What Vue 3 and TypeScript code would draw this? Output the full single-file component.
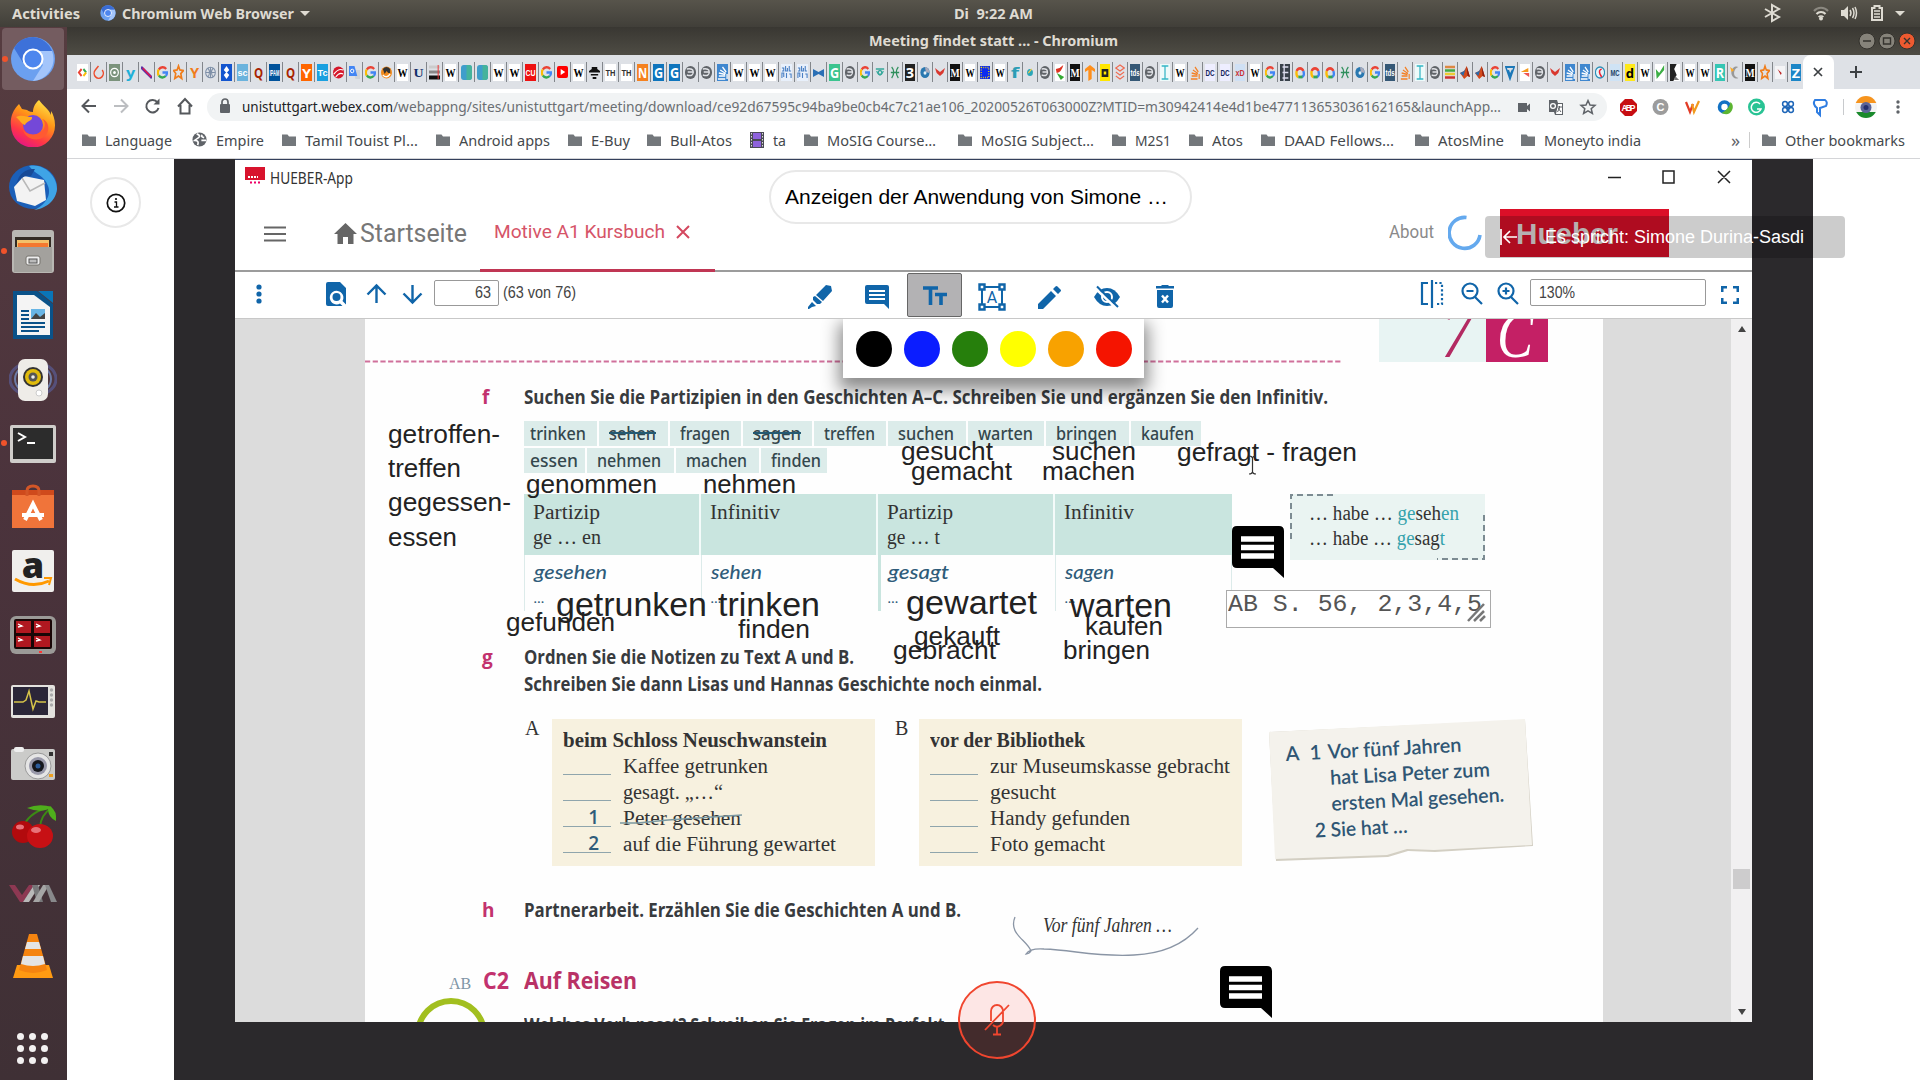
<script setup lang="ts">
import type { Directive } from 'vue'

/* Fits a run of text to an exact width in pixels. */
const vFit: Directive<HTMLElement, number> = {
  mounted(el, binding) {
    const natural = el.getBoundingClientRect().width
    if (!natural) return
    el.style.width = binding.value + 'px'
    el.style.transform = `scaleX(${binding.value / natural})`
  },
}

interface Fav { k: string; t?: string; c?: string; b?: string }
const F = (k: string, t = '', c = '', b = ''): Fav => ({ k, t, c, b })
const W = F('serif', 'W', '#000', '#fff')
const G = F('g')
const globe = F('globe')
const M = F('serif', 'M', '#fff', '#111')
const tds = F('tiny', 'tds', '#fff', '#355876')
const so = F('so', '', '#f48024')
const sob = F('so', '', '#fff', '#3f87cf')
const beam = F('beam')
const cloud = F('cloud')
const matlab = F('matlab')
const hh = F('hh')
const chev = F('chev')

const favs: Fav[] = [
  F('code'), F('ring'), F('target'), F('sans', 'y', '#1fb0d8'), F('slash'), G, F('star'), F('sans', 'Y', '#f07c1c'), F('sphere'),
  F('dia', '', '#fff', '#1355cf'), F('tiny', 'sc', '#fff', '#6bb3dd'), F('sans', 'Q', '#a82400'), F('tiny', 'IPAM', '#fff', '#00529b'), F('sans', 'Q', '#a82400'),
  F('plain', 'Y', '#fff', '#ff6600'), F('tiny', 'Tc', '#fff', '#1aa0e0'), F('swirl'), F('trans'), G, F('face'), W,
  F('serif', 'U', '#12306b'), F('bars'), W, F('teal'), F('teal'), W, W, F('tiny', 'CU', '#fff', '#ee1111'), G, F('yt'), W, F('bee'),
  F('th', 'TH', '#333', '#fff'), F('th', 'TH', '#333', '#fff'), F('sans', 'N', '#fff', '#f58220'), F('sans', 'G', '#fff', '#0f75bd'), F('sans', 'G', '#fff', '#0f75bd'),
  globe, globe, sob, W, W, W, F('bib'), F('bib'), F('fly'), F('sans', 'G', '#fff', '#3cc48f'),
  globe, G, F('eye'), hh, F('sans', '3', '#fff', '#222'), F('orb'), chev, M, W, F('eu'), W, F('sans', 'f', '#2c9db5'), F('dot'), globe,
  F('chili'), M, F('tf'), F('ysq'), F('stack'), tds, globe, beam, W, so, F('tiny', 'DC', '#12245a', '#eef'), F('tiny', 'DC', '#12245a', '#eef'), F('tiny', 'xD', '#c33', '#cfe0f4'), W, G,
  F('film'), cloud, cloud, cloud, hh, F('orb'), G, tds, so, beam, globe, F('books'), matlab, matlab, G, F('tri'), F('flag'), globe, chev,
  sob, sob, F('cee'), F('tiny', 'MC', '#246', '#cfe3f5'), F('plain', 'd', '#000', '#ffe81a'), W, F('leaf'), F('photo'), W, W,
  F('sans', 'R', '#fff', '#35c6b4'), F('moon'), M, F('star'), F('pin'), F('plain', 'Z', '#fff', '#1c86c7'),
]

interface Mark { w: number; t: string; i?: string; tw: number }
const marks: Mark[] = [
  { w: 110, t: 'Language', tw: 67 },
  { w: 90, t: 'Empire', tw: 48, i: 'globe' },
  { w: 154, t: 'Tamil Touist Pl…', tw: 113 },
  { w: 132, t: 'Android apps', tw: 91 },
  { w: 79, t: 'E-Buy', tw: 39 },
  { w: 103, t: 'Bull-Atos', tw: 62 },
  { w: 54, t: 'ta', tw: 13, i: 'film' },
  { w: 154, t: 'MoSIG Course…', tw: 109 },
  { w: 154, t: 'MoSIG Subject…', tw: 113 },
  { w: 77, t: 'M2S1', tw: 36 },
  { w: 72, t: 'Atos', tw: 31 },
  { w: 154, t: 'DAAD Fellows…', tw: 110 },
  { w: 106, t: 'AtosMine', tw: 66 },
  { w: 130, t: 'Moneyto india', tw: 97 },
]

const dock = ['chromium', 'firefox', 'bird', 'files', 'writer', 'rhythm', 'term', 'soft', 'amazon', 'termi', 'monitor', 'camera', 'cherry', 'vmm', 'vlc']
const running = ['chromium', 'files', 'term']

const swatches = ['#000', '#0b1dff', '#267f0c', '#ffff00', '#f8a200', '#f51400']

interface Chip { t: string; w: number; tw: number; s?: boolean }
const chips1: Chip[] = [
  { t: 'trinken', w: 73, tw: 56 }, { t: 'sehen', w: 69, tw: 47, s: true }, { t: 'fragen', w: 71, tw: 50 },
  { t: 'sagen', w: 69, tw: 48, s: true }, { t: 'treffen', w: 72, tw: 51 }, { t: 'suchen', w: 78, tw: 56 },
  { t: 'warten', w: 76, tw: 55 }, { t: 'bringen', w: 83, tw: 61 }, { t: 'kaufen', w: 70, tw: 53 },
]
const chips2: Chip[] = [
  { t: 'essen', w: 61, tw: 48 }, { t: 'nehmen', w: 87, tw: 64 }, { t: 'machen', w: 83, tw: 61 }, { t: 'finden', w: 66, tw: 50 },
]

const cols = [
  { h: 'Partizip', hw: 67, e: 'ge … en', ew: 68, s: 'gesehen', sw: 73 },
  { h: 'Infinitiv', hw: 70, e: '', ew: 0, s: 'sehen', sw: 51 },
  { h: 'Partizip', hw: 66, e: 'ge … t', ew: 53, s: 'gesagt', sw: 61 },
  { h: 'Infinitiv', hw: 70, e: '', ew: 0, s: 'sagen', sw: 49 },
]

const storyA = [
  { n: '', t: 'Kaffee getrunken', w: 145 }, { n: '', t: 'gesagt. „…“', w: 100 },
  { n: '1', t: 'Peter gesehen', w: 118, s: true }, { n: '2', t: 'auf die Führung gewartet', w: 213 },
]
const storyB = [
  { n: '', t: 'zur Museumskasse gebracht', w: 240 }, { n: '', t: 'gesucht', w: 66 },
  { n: '', t: 'Handy gefunden', w: 140 }, { n: '', t: 'Foto gemacht', w: 115 },
]

/* Typed annotations on the page canvas: left, baseline, width, font size. */
const notes: [string, number, number, number, number][] = [
  ['getroffen-', 388, 443, 112, 26], ['treffen', 388, 477, 73, 26], ['gegessen-', 388, 511, 123, 26], ['essen', 388, 546, 69, 26],
  ['genommen', 526, 493, 131, 26], ['nehmen', 703, 493, 93, 26],
  ['getrunken', 556, 616, 151, 34], ['trinken', 718, 616, 102, 34], ['gefunden', 506, 631, 109, 26], ['finden', 738, 638, 72, 26],
  ['gesucht', 901, 460, 92, 26], ['gemacht', 911, 480, 101, 26], ['suchen', 1052, 460, 84, 26], ['machen', 1042, 480, 93, 26],
  ['gefragt - fragen', 1177, 461, 180, 26],
  ['gewartet', 906, 614, 131, 34], ['warten', 1070, 617, 102, 34], ['gekauft', 914, 645, 86, 26], ['gebracht', 893, 659, 103, 26],
  ['kaufen', 1085, 635, 78, 26], ['bringen', 1063, 659, 87, 26],
]
const noteStyle = (n: [string, number, number, number, number]) => ({
  left: n[1] - 235 + 'px',
  top: n[2] - 319 - n[4] * 0.8465 + 'px',
  fontSize: n[4] + 'px',
})
</script>

<template>
  <div class="desk">
    <header class="topbar">
      <b v-fit="68" class="act">Activities</b>
      <svg class="appico" width="16" height="16" viewBox="0 0 48 48"><circle cx="24" cy="24" r="23" fill="#6ba0f0" /><path d="M24 1A23 23 0 0 0 4 12l10 17 10-15h20A23 23 0 0 0 24 1" fill="#3a6cd4" /><path d="M44 14H24l10 15-10 18a23 23 0 0 0 20-33" fill="#a3c5fb" /><circle cx="24" cy="24" r="10.500" fill="#4d86ee" stroke="#fff" stroke-width="2.500" /></svg>
      <b v-fit="172" class="app">Chromium Web Browser</b>
      <i class="tri"></i>
      <b v-fit="79" class="clock">Di&nbsp; 9:22 AM</b>
      <svg class="tray" width="150" height="27" viewBox="0 0 150 27" fill="none" stroke="#dedbd2">
        <path d="M1 9l14 8-7 4V5l7 4L1 17" stroke-width="2" transform="translate(2 0)" />
        <g transform="translate(51 0)" stroke-width="2"><path d="M1 11a9 9 0 0 1 14 0" stroke="#8b8880" /><path d="M3.500 14a6 6 0 0 1 9 0" /><path d="M5.500 17a3.500 3.500 0 0 1 5 0" stroke-width="1.500" /><circle cx="8" cy="18.500" r="1" fill="#dedbd2" /></g>
        <g transform="translate(79 0)"><path d="M0 10h3l4-4v14l-4-4H0z" fill="#dedbd2" stroke="none" /><path d="M9 10q2 3 0 6M11.500 8q3 5 0 10M14 7q3 6 0 12" stroke-width="1.500" /></g>
        <g transform="translate(109 0)"><path d="M1 8h2.500V6h5v2H11v12H1z" stroke-width="2" /><path d="M3 11h6M3 14h6M3 17h6" stroke-width="1.500" /></g>
        <path d="M133 11h10l-5 5z" fill="#dedbd2" stroke="none" />
      </svg>
    </header>

    <div class="under">
      <aside class="dock">
        <div v-for="d in dock" :key="d" class="slot" :class="[d, { on: d === 'chromium' }]">
          <i v-if="running.includes(d)" class="run"></i>
          <svg width="48" height="48" viewBox="0 0 48 48">
            <g v-if="d === 'chromium'"><circle cx="24" cy="24" r="22" fill="#6ba0f0" /><path d="M24 2A22 22 0 0 0 5 13l11 18 8-15h19A22 22 0 0 0 24 2" fill="#3d71d9" /><path d="M43 16H24l10 14-10 16a22 22 0 0 0 19-30" fill="#a3c5fb" /><circle cx="24" cy="24" r="9.500" fill="#4d86ee" stroke="#fff" stroke-width="2" /></g>
            <g v-else-if="d === 'firefox'">
              <defs><linearGradient id="ff" x1=".8" y1="0" x2=".3" y2="1"><stop offset="0" stop-color="#ffe94a" /><stop offset=".4" stop-color="#ff9417" /><stop offset=".75" stop-color="#ff3647" /><stop offset="1" stop-color="#e31587" /></linearGradient></defs>
              <path d="M30 1c-5 4-6 9-6 12-4 0-6-2-6-2l-5-1-3-5c-7 7-9 15-8 22a22 22 0 0 0 44-1c0-6-2-11-4-14v4C40 10 34 7 30 1" fill="url(#ff)" /><circle cx="24" cy="26" r="10" fill="#7448d8" /><path d="M7 18c6-3 10 0 16 0 1 4-6 4-7 8-4-1-5-5-9-8" fill="#ffab1f" /><path d="M14 30c2 6 14 8 20 1 3-4 2-9-1-11 8 2 9 15 0 19-8 4-18-1-19-9" fill="#ff5a32" />
            </g>
            <g v-else-if="d === 'bird'"><ellipse cx="24" cy="24" rx="24" ry="22" fill="#1b5fb8" /><path d="M20 3C34 0 48 12 48 26 47 38 36 46 25 47c10-4 18-14 14-24C35 12 27 12 20 3" fill="#3fa4e6" /><path d="M5 24l10-11 20 4 2 20-11 6-18-5z" fill="#f3f3f3" /><path d="M13 15l8 13 15-8" fill="none" stroke="#b8b8b8" stroke-width="1.500" /><path d="M10 14q6-9 16-8l-4 7q-8-2-15 8z" fill="#174a97" /></g>
            <g v-else-if="d === 'files'"><rect x="3" y="3" width="42" height="43" rx="3" fill="#b9b7b3" /><rect x="6" y="10" width="36" height="11" fill="#332b24" /><path d="M8 13h32v8H8z" fill="#f3c16a" /><path d="M9 16h30v5H9z" fill="#f4782f" /><rect x="5" y="20" width="38" height="25" fill="#a3a19d" /><rect x="17" y="29" width="14" height="9" rx="2" fill="#eee" stroke="#77746f" /><rect x="20" y="32" width="8" height="4" fill="#bbb" stroke="#555" /></g>
            <g v-else-if="d === 'writer'"><path d="M4 0h24l16 13v35H4z" fill="#0a5289" /><path d="M29 0h15v12z" fill="#0a75b8" /><path d="M8 4h17l16 12v28H8z" fill="#f4f4f4" /><path d="M12 20h8M12 24h8M12 28h8M12 32h24M12 36h24M12 40h18" stroke="#0a5289" stroke-width="2" /><rect x="22" y="18" width="14" height="10" fill="#68b5e5" /><path d="M22 28l5-6 4 4 5-4v6z" fill="#444" /></g>
            <g v-else-if="d === 'rhythm'"><ellipse cx="24" cy="24" rx="23" ry="17" fill="none" stroke="#56507a" stroke-width="3" /><ellipse cx="24" cy="24" rx="18" ry="15" fill="none" stroke="#6d7ba6" stroke-width="2" /><rect x="9" y="4" width="30" height="42" rx="7" fill="#eeece8" /><circle cx="24" cy="22" r="10" fill="#333" /><circle cx="24" cy="22" r="8" fill="#e0bb0c" /><circle cx="24" cy="22" r="4.500" fill="#555" /><circle cx="24" cy="22" r="1.800" fill="#eee" /><circle cx="30" cy="38" r="3" fill="#fff" stroke="#ccc" /></g>
            <g v-else-if="d === 'term'"><rect x="1" y="6" width="46" height="38" rx="2" fill="#cfcdca" /><rect x="4" y="9" width="40" height="31" fill="#2c2c2c" /><path d="M9 14l7 4-7 4" fill="none" stroke="#fff" stroke-width="2" /><path d="M18 24h8" stroke="#fff" stroke-width="2" /></g>
            <g v-else-if="d === 'soft'"><path d="M3 9h42v36H3z" fill="#f0743a" /><path d="M3 7h42v5H3z" fill="#cf4a1c" /><path d="M18 13V8q0-5 6-5t6 5v5" fill="none" stroke="#d35627" stroke-width="3" /><path d="M16 37l8-16 8 16M13 32h22" fill="none" stroke="#fff" stroke-width="4" /></g>
            <g v-else-if="d === 'amazon'"><rect x="3" y="3" width="42" height="42" rx="2" fill="#f0efed" /><text x="24" y="31" text-anchor="middle" font-family="Open Sans, sans-serif" font-weight="800" font-size="36" fill="#222">a</text><path d="M6 32q17 10 34 2" fill="none" stroke="#f90" stroke-width="3" /><path d="M35 31h7l-2 7" fill="none" stroke="#f90" stroke-width="2" /></g>
            <g v-else-if="d === 'termi'"><rect x="1" y="5" width="46" height="38" rx="6" fill="#9b9a97" /><rect x="5" y="8" width="38" height="30" rx="2" fill="#180606" /><path d="M7 10h15v12H7zM25 10h16v12H25zM7 25h15v11H7zM25 25h16v11H25z" fill="#b01820" /><path d="M9 13l4 2-4 1M27 13l4 2-4 1M9 27l4 2-4 1M27 27l4 2-4 1" fill="none" stroke="#fff" stroke-width="1.300" /><path d="M30 41h3" stroke="#f33" stroke-width="2" /></g>
            <g v-else-if="d === 'monitor'"><rect x="2" y="7" width="44" height="33" rx="2" fill="#e4e2de" /><rect x="4" y="9" width="35" height="28" fill="#2b2638" /><path d="M5 24h9l3-2 3-9 4 18 3-8 3 1h7" fill="none" stroke="#d5c34a" stroke-width="1.500" /><g fill="#aaa"><circle cx="42.500" cy="12" r="1.700" /><circle cx="42.500" cy="17" r="1.700" /><circle cx="42.500" cy="22" r="1.700" /><circle cx="42.500" cy="27" r="1.700" /></g></g>
            <g v-else-if="d === 'camera'"><rect x="2" y="10" width="44" height="31" rx="2" fill="#cbcbc9" /><rect x="5" y="8" width="10" height="5" rx="2" fill="#eee" /><circle cx="29" cy="27" r="13" fill="#e5e5e5" stroke="#999" /><circle cx="29" cy="27" r="9" fill="#99a" /><circle cx="29" cy="27" r="6" fill="#15171d" /><circle cx="29" cy="27" r="2.500" fill="#2c5c9b" /><path d="M40 13h4v4h-4z" fill="#333" /><path d="M40 35h4v3h-4z" fill="#f0a020" /></g>
            <g v-else-if="d === 'cherry'"><path d="M15 22Q22 8 42 4M31 24Q32 12 42 5" fill="none" stroke="#3c8a14" stroke-width="2" /><path d="M18 5q12-5 25-1-10 7-25 1M42 4q6 4 5 14-8-4-8-12" fill="#4fae1c" /><ellipse cx="14" cy="29" rx="11" ry="11" fill="#b20a0d" /><ellipse cx="31" cy="33" rx="13" ry="12" fill="#c71014" /><ellipse cx="27" cy="27" rx="5" ry="3" fill="#e8737a" /><ellipse cx="11" cy="24" rx="4" ry="2.500" fill="#e8737a" /></g>
            <g v-else-if="d === 'vmm'"><path d="M0 15h6l7 10 7-10h5L14 32h-3z" fill="#8d3852" /><path d="M14 32l11-17h6L20 32z" fill="#b9b9b9" /><path d="M23 15h6l5 17h-6z" fill="#77787a" /><path d="M24 32l10-17h6L30 32z" fill="#a5a5a5" /><path d="M36 15h4l8 17h-6z" fill="#88898b" /></g>
            <g v-else><path d="M8 34h32l4 13H4z" fill="#ff9a12" /><path d="M20 3h8l10 36q-14 6-28 0z" fill="#f58410" /><path d="M18 11h12l2 7H16zM14 25h20l2 8q-12 4-24 0z" fill="#e4e4e4" /></g>
          </svg>
        </div>
        <div class="grid"><i v-for="n in 9" :key="n"></i></div>
      </aside>

      <main class="chrome">
        <div class="wtitle">
          <b v-fit="249">Meeting findet statt ... - Chromium</b>
          <div class="wbtns">
            <svg width="58" height="18" viewBox="0 0 58 18"><circle cx="9" cy="9" r="8" fill="#86837a" stroke="#33312c" /><circle cx="29" cy="9" r="8" fill="#86837a" stroke="#33312c" /><circle cx="49" cy="9" r="8" fill="#ee5a30" stroke="#33312c" /><path d="M5 9h8M25.500 6h7v6h-7zM46 6l6 6M52 6l-6 6" fill="none" stroke="#35332e" stroke-width="1.400" /></svg>
          </div>
        </div>

        <div class="tabs">
          <div v-for="(f, n) in favs" :key="n" class="tab" :class="{ slim: n > 47 }">
            <svg width="11" height="17" viewBox="0 0 12 17" preserveAspectRatio="none">
              <rect v-if="f.b" width="12" height="17" :fill="f.b" />
              <text v-if="f.k === 'serif'" x="6" y="13" text-anchor="middle" font-family="Liberation Serif, serif" font-weight="bold" font-size="13" textLength="11" lengthAdjust="spacingAndGlyphs" :fill="f.c">{{ f.t }}</text>
              <text v-else-if="f.k === 'sans' || f.k === 'plain'" x="6" y="13.500" text-anchor="middle" font-family="Open Sans, sans-serif" font-weight="bold" :font-size="f.k === 'sans' ? 15 : 13" textLength="10" lengthAdjust="spacingAndGlyphs" :fill="f.c">{{ f.t }}</text>
              <text v-else-if="f.k === 'tiny' || f.k === 'th'" x="6" y="12" text-anchor="middle" font-family="Liberation Sans, sans-serif" font-weight="bold" font-size="9" textLength="11" lengthAdjust="spacingAndGlyphs" :fill="f.c">{{ f.t }}</text>
              <g v-else-if="f.k === 'g'" fill="none" stroke-width="2.400"><path d="M10 5A5 5 0 0 0 2 5.500" stroke="#ea4335" /><path d="M2 5.500a5 5 0 0 0 0 6" stroke="#fbbc05" /><path d="M2 11.500a5 5 0 0 0 7.500.500" stroke="#34a853" /><path d="M9.500 12q1.500-1.500 1.500-3.500H6" stroke="#4285f4" /></g>
              <g v-else-if="f.k === 'globe'"><rect x="0" y="2" width="12" height="13" rx="6" fill="#5f6368" /><path d="M2 5q7-1 7 3H3M9 8q0 5-7 3" fill="none" stroke="#e2e4e8" stroke-width="1.500" /></g>
              <g v-else-if="f.k === 'so'" fill="none" :stroke="f.c" stroke-width="1.400"><path d="M1 15h8M2 12h7M2 9l7 1.500M3.500 6l6 3.500M6 3l4 5M11 10v5" /></g>
              <g v-else-if="f.k === 'beam'"><rect width="12" height="17" fill="#eefafa" /><path d="M2 2h8M6 2v13M2 15h8" stroke="#35b6c6" stroke-width="1.500" /></g>
              <g v-else-if="f.k === 'cloud'" fill="none" stroke-width="2.800"><path d="M2 7a4.300 4.300 0 0 1 8 0" stroke="#ea4335" /><path d="M2 7q-1 5 2 6" stroke="#fbbc05" /><path d="M10 7q2 5-2 6" stroke="#4285f4" /><path d="M4 13h5" stroke="#34a853" /></g>
              <g v-else-if="f.k === 'matlab'"><path d="M0 9l5-2 3-5 4 11-3-1-4 3z" fill="#d4491a" /><path d="M0 9l5-2 2-3-3 8z" fill="#2c6aa8" /><path d="M8 2l4 11-3-1z" fill="#8e1f10" /></g>
              <path v-else-if="f.k === 'hh'" d="M2 3q5 5 0 11M10 3Q5 8 10 14M1 8.500h10" fill="none" stroke="#2e8f5c" stroke-width="1.500" />
              <path v-else-if="f.k === 'chev'" d="M0 4l6 4 6-4-2 5-4 3-4-3z" fill="#d9382f" />
              <g v-else-if="f.k === 'code'"><rect width="12" height="17" fill="#fff" /><path d="M5 5L2 8.500 5 12" stroke="#ea4335" stroke-width="2" fill="none" /><path d="M7 5l3 3.500" stroke="#34a853" stroke-width="2" /><path d="M10 8.500L7 12" stroke="#fbbc05" stroke-width="2" /></g>
              <path v-else-if="f.k === 'ring'" d="M6 2L2.500 6a5 5 0 1 0 7.500 0" fill="none" stroke="#ee4c2c" stroke-width="1.600" />
              <g v-else-if="f.k === 'target'"><rect width="12" height="17" fill="#7b937c" /><circle cx="6" cy="8.500" r="4.200" fill="none" stroke="#fff" stroke-width="1.300" /><circle cx="6" cy="8.500" r="1.500" fill="#fff" /></g>
              <g v-else-if="f.k === 'slash'"><path d="M0 3l12 11" stroke="#5a2ea6" stroke-width="3" /><path d="M2 4l9 9" stroke="#e5194b" stroke-width="1.500" /></g>
              <path v-else-if="f.k === 'star'" d="M6 2l1.500 4 4 .5-3 3 1 5L6 12l-4 2.500 1-5-2.500-3 4-.5z" fill="none" stroke="#f07d1a" stroke-width="1.800" />
              <g v-else-if="f.k === 'sphere'" fill="none" stroke="#7f90a8" stroke-width="1.100"><circle cx="6" cy="8.500" r="5.300" /><path d="M6 3v11M1 8.500h10M3 4q4 4 0 9M9 4q-4 4 0 9" /></g>
              <path v-else-if="f.k === 'dia'" d="M6 2l3 4-3 3-3-3zM6 8l3 3-3 4-3-4z" fill="#fff" />
              <g v-else-if="f.k === 'swirl'"><circle cx="6" cy="8.500" r="6" fill="#d6182b" /><path d="M1 10q5-6 10-4M3 13q4-5 8-3" stroke="#fff" fill="none" stroke-width="1.200" /></g>
              <g v-else-if="f.k === 'trans'"><path d="M5 6h7v9H7z" fill="#cfd3d8" /><path d="M0 2h6l3 10H0z" fill="#4285f4" /><circle cx="3.500" cy="7" r="1.800" fill="none" stroke="#fff" /></g>
              <g v-else-if="f.k === 'face'"><circle cx="6" cy="8.500" r="6" fill="#f18a1c" /><path d="M2 5q4-4 8 0v4H8L6 7l-2 3z" fill="#333" /><path d="M2 11q4 4 8-1" stroke="#fff" fill="none" stroke-width="1.500" /></g>
              <g v-else-if="f.k === 'bars'"><path d="M0 3h12" stroke="#ccc" stroke-width="3" /><path d="M0 8h12" stroke="#888" stroke-width="3" /><path d="M0 13.500h12" stroke="#111" stroke-width="4" /><path d="M10 1v14" stroke="#e33" stroke-width="1" /></g>
              <g v-else-if="f.k === 'teal'"><rect y="1" width="12" height="15" rx="3" fill="#3f9ecb" /><path d="M6 1h3q3 0 3 3v9q0 3-3 3H6z" fill="#45b39c" /></g>
              <g v-else-if="f.k === 'yt'"><rect y="2" width="12" height="12" rx="2" fill="#f00" /><path d="M4 5l5 3-5 3z" fill="#fff" /></g>
              <g v-else-if="f.k === 'bee'" fill="#111"><path d="M3 3h6v2H3zM0 7h12v1.500H0zM2 10h8v1.500H2zM4 13h4v2H4z" /><path d="M0 7l3-2h6l3 2z" /></g>
              <g v-else-if="f.k === 'bib'"><rect width="12" height="17" fill="#e8f0fb" /><path d="M1 4h2v3H1M5 2v5h2V4M9 2v5h2M1 14V9h2v4M6 9v5M9 10h2v4" stroke="#4a80c4" fill="none" stroke-width="1.200" /></g>
              <path v-else-if="f.k === 'fly'" d="M0 5l6 3 6-3v8L6 10l-6 3z" fill="#2a6fb5" />
              <g v-else-if="f.k === 'eye'" fill="none" stroke="#35a89b" stroke-width="1.300"><path d="M1 5h10M2 7q4 8 8 0" /><circle cx="6" cy="8.500" r="2" /></g>
              <g v-else-if="f.k === 'orb'"><circle cx="6" cy="8.500" r="5.500" fill="#2a78b0" /><path d="M6 3a5 5 0 0 1 5 6L7 8z" fill="#aab" /><circle cx="6" cy="9" r="1.800" fill="#e6f1f8" /></g>
              <g v-else-if="f.k === 'eu'"><rect y="2" width="12" height="13" fill="#0c2cf0" /><rect x="1.500" y="3.500" width="9" height="10" fill="none" stroke="#fd0" stroke-width="1.400" stroke-dasharray="1 1.500" /></g>
              <g v-else-if="f.k === 'dot'"><circle cx="6" cy="8.500" r="3.500" fill="#2aa6b8" /><path d="M4 9q3-3 4-4" stroke="#fc4" stroke-width="1.200" /></g>
              <g v-else-if="f.k === 'chili'"><rect width="12" height="17" fill="#fff" /><path d="M1 5q6-1 9-4-2 7-8 8z" fill="#d32" /><path d="M2 9l9 4-4 3z" fill="#3a3" /></g>
              <path v-else-if="f.k === 'tf'" d="M0 5l6-4 6 4v3L8 6v9l-4 2V6L0 8z" fill="#ff8f1a" />
              <g v-else-if="f.k === 'ysq'"><rect width="12" height="17" fill="#ffe600" /><rect x="2" y="5" width="8" height="8" fill="#222" /><rect x="4.500" y="7.500" width="3" height="3" fill="#ffe600" /></g>
              <path v-else-if="f.k === 'stack'" d="M1 4l5-3 5 3-5 3zM1 8l5 3 5-3M1 12l5 3 5-3" fill="none" stroke="#f0694f" stroke-width="1.300" />
              <g v-else-if="f.k === 'film'"><rect width="12" height="17" fill="#39414a" /><path d="M3 3h7M3 8.500h7M3 14h7M5 0v17" stroke="#dde" stroke-width="1.600" /></g>
              <g v-else-if="f.k === 'books'"><path d="M0 3h12" stroke="#d84" stroke-width="2.500" /><path d="M0 6.500h12" stroke="#4a4" stroke-width="2.500" /><path d="M0 10h12" stroke="#ec3" stroke-width="2.500" /><path d="M0 13.500h12" stroke="#c33" stroke-width="2.500" /></g>
              <path v-else-if="f.k === 'tri'" d="M1 3h10L6 15zM4 6l2 5 3-5" fill="none" stroke="#1c78b8" stroke-width="1.800" />
              <g v-else-if="f.k === 'flag'"><rect width="12" height="17" fill="#fff" /><path d="M1 8l9-4v4z" fill="#f59a1c" /><path d="M4 9h7v4z" fill="#e55" /></g>
              <g v-else-if="f.k === 'cee'"><circle cx="6" cy="8.500" r="5.500" fill="#e5f3f8" stroke="#2b8fb8" stroke-width="1.400" /><path d="M8 5q-4 1-2 5l2 3" stroke="#e23" stroke-width="1.800" fill="none" /></g>
              <g v-else-if="f.k === 'leaf'"><rect width="12" height="17" fill="#fff" /><path d="M1 5l4 4 6-8v5l-9 9z" fill="#3cae45" /></g>
              <g v-else-if="f.k === 'photo'"><rect width="12" height="17" fill="#fff" /><path d="M0 0h8L5 5l3 6-4 6H0z" fill="#222" /><path d="M6 12l5 4H5z" fill="#777" /></g>
              <g v-else-if="f.k === 'moon'"><path d="M10 3a6 6 0 1 0 0 11q-6-1-5-6 1-4 5-5" fill="#999" /><path d="M0 3l5 3-3 2z" fill="#fa2" /></g>
              <g v-else-if="f.k === 'pin'"><rect y="2" width="12" height="13" fill="#f4f4f6" /><path d="M3 5l5 4-1 2z" fill="#b22" /></g>
            </svg>
          </div>
          <div class="tab-on"><svg width="10" height="10" viewBox="0 0 10 10"><path d="M1 1l8 8M9 1L1 9" stroke="#3c4043" stroke-width="1.700" /></svg></div>
          <svg class="plus" width="14" height="14" viewBox="0 0 14 14"><path d="M7 1v12M1 7h12" stroke="#3c4043" stroke-width="2" /></svg>
        </div>

        <div class="bar">
          <svg class="navs" width="119" height="24" viewBox="0 0 119 24" fill="none" stroke="#55585c" stroke-width="2">
            <path d="M16 12H3M9 5.500L2.500 12 9 18.500" />
            <path d="M34 12h13M41 5.500l6.500 6.500-6.500 6.500" stroke="#bcbec1" />
            <path d="M77.500 8.500A6.200 6.200 0 1 0 78.500 14" /><path d="M79.500 4.500v6h-6z" fill="#55585c" stroke="none" />
            <path d="M98 12.500l7-7.500 7 7.500M100.500 11v8.500h9V11" />
          </svg>
          <div class="url">
            <svg width="12" height="16" viewBox="0 0 12 16"><rect x="1" y="6" width="10" height="9" rx="1" fill="#5f6368" /><path d="M3 7V4a3 3 0 0 1 6 0v3" fill="none" stroke="#5f6368" stroke-width="1.700" /></svg>
            <span v-fit="151" class="host">unistuttgart.webex.com</span><span v-fit="1108" class="path">/webappng/sites/unistuttgart/meeting/download/ce92d67595c94ba9be0cb4c7c21ae106_20200526T063000Z?MTID=m30942414e4d1be477113653036162165&amp;launchApp…</span>
            <svg class="urlico" width="80" height="18" viewBox="0 0 80 18"><path d="M0 5h9v3l3-2.500v8L9 11v3H0z" fill="#5f6368" /><path d="M31 2h8l1 3h5v12h-8l-1-3h-5z" fill="#5f6368" /><path d="M40 6h4v10h-6z" fill="#fff" /><circle cx="35" cy="8" r="2.400" fill="none" stroke="#fff" stroke-width="1.300" /><path d="M39 9h5M41.500 8v2l-2 4M40 10l3 4" stroke="#5f6368" fill="none" /><path d="M70 2.500l2 4.500 5 .4-3.800 3.300 1.200 4.800-4.400-2.600-4.400 2.600 1.200-4.800L63 7.400 68 7z" fill="none" stroke="#5f6368" stroke-width="1.500" /></svg>
          </div>
          <svg class="ext" width="300" height="26" viewBox="0 0 300 26">
            <path d="M10 5h7l5 5v7l-5 5h-7l-5-5v-7z" fill="#c70d12" /><text x="13.500" y="16.500" text-anchor="middle" font-family="Liberation Sans, sans-serif" font-weight="bold" font-size="8.500" textLength="14" fill="#fff">ABP</text>
            <circle cx="45.500" cy="13" r="8" fill="#9c9c9c" /><text x="45.500" y="17" text-anchor="middle" font-family="Liberation Sans, sans-serif" font-weight="bold" font-size="11" fill="#fff">C</text>
            <path d="M71 8l4 10 3-8" fill="none" stroke="#e23b26" stroke-width="2.200" /><path d="M77 10l2 8 5-11" fill="none" stroke="#f29a1c" stroke-width="2.200" />
            <circle cx="109.500" cy="13" r="5" fill="#fff" stroke="#1272c4" stroke-width="3.600" /><path d="M109.500 20a7 7 0 0 0 6-12q-1 7-9 11z" fill="#5cb531" />
            <circle cx="141.500" cy="13" r="8.500" fill="#29c394" /><path d="M145 10a5 5 0 1 0 1 5h-4" fill="none" stroke="#fff" stroke-width="1.500" />
            <g fill="none" stroke="#1e66b8" stroke-width="1.500"><circle cx="170" cy="10" r="2.400" /><circle cx="176" cy="10" r="2.400" /><circle cx="170" cy="16" r="2.400" /><circle cx="176" cy="16" r="2.400" /><path d="M171 12l4 3M175 12l-4 3" /></g>
            <path d="M200 6h10q3 2 1 6l-6 2v7l-3-3v-4q-5-4-2-8z" fill="none" stroke="#2f7de1" stroke-width="2" />
            <path d="M228.500 5v16" stroke="#c8cacd" />
            <clipPath id="av"><circle cx="251" cy="13" r="11" /></clipPath><g clip-path="url(#av)"><rect x="240" y="2" width="22" height="22" fill="#f3f3f3" /><rect x="240" y="2" width="22" height="7" fill="#f7941d" /><rect x="240" y="18" width="22" height="7" fill="#1a8a2c" /><circle cx="251" cy="13.500" r="5.500" fill="#5c6598" /><circle cx="251" cy="13.500" r="2.500" fill="#26306d" /></g>
            <g fill="#5f6368"><circle cx="283" cy="8" r="1.700" /><circle cx="283" cy="13" r="1.700" /><circle cx="283" cy="18" r="1.700" /></g>
          </svg>
        </div>

        <nav class="marks">
          <div v-for="m in marks" :key="m.t" class="mark" :style="{ width: m.w + 'px' }">
            <svg v-if="!m.i" width="14" height="14" viewBox="0 0 14 14"><path d="M0 1.500h5.500L7 3.500h7v9.500H0z" fill="#73777b" /></svg>
            <svg v-else-if="m.i === 'globe'" width="15" height="15" viewBox="0 0 16 16"><circle cx="8" cy="8" r="7.500" fill="#5f6368" /><path d="M5 2q5 2 2 4T3 9q5 0 3 5M10 9h5M11 3q-2 2 2 3" stroke="#fff" stroke-width="1.800" fill="none" /></svg>
            <svg v-else width="14" height="16" viewBox="0 0 14 16"><rect width="14" height="16" fill="#4a4a55" /><rect x="3" y="1" width="8" height="6" fill="#8e62dc" /><rect x="3" y="9" width="8" height="6" fill="#8e62dc" /><path d="M1.500 1v14M12.500 1v14" stroke="#ddd" stroke-dasharray="1.500 1.500" /></svg>
            <span v-fit="m.tw">{{ m.t }}</span>
          </div>
          <span class="more">»</span><i class="msep"></i>
          <div class="mark"><svg width="14" height="14" viewBox="0 0 14 14"><path d="M0 1.500h5.500L7 3.500h7v9.500H0z" fill="#73777b" /></svg><span v-fit="120">Other bookmarks</span></div>
        </nav>

        <section class="web">
          <div class="left"><div class="info"><svg width="20" height="20" viewBox="0 0 20 20"><circle cx="10" cy="10" r="8.700" fill="none" stroke="#111" stroke-width="1.700" /><path d="M8.500 9h2v5M8 14h4.500" fill="none" stroke="#111" stroke-width="1.300" /><circle cx="10" cy="6" r="1.100" fill="#111" /></svg></div></div>

          <div class="stage">
            <div class="win">
              <div class="hb-title">
                <svg width="20" height="17" viewBox="0 0 20 17"><path d="M0 0h20v13H0z" fill="#d8132d" /><path d="M3 10h10" stroke="#fff" stroke-dasharray="2 1" stroke-width="2" /><path d="M5 15.500h11" stroke="#e06" stroke-dasharray="2 2" stroke-width="2" /></svg>
                <span v-fit="83">HUEBER-App</span>
                <svg class="hb-btns" width="124" height="14" viewBox="0 0 124 14" fill="none" stroke="#222" stroke-width="1.500"><path d="M0 7.500h13M55 1h11v12H55zM110 1l12 12M122 1l-12 12" /></svg>
              </div>
              <div class="hb-nav">
                <svg class="burger" width="22" height="16" viewBox="0 0 22 16"><path d="M0 1.500h22M0 8h22M0 14.500h22" stroke="#666" stroke-width="2" /></svg>
                <div class="home"><svg width="23" height="21" viewBox="0 0 23 21"><path d="M11.500 0L23 11h-3.500v10H14v-7H9v7H3.500V11H0z" fill="#666" /></svg><span v-fit="107">Startseite</span></div>
                <div class="book"><span v-fit="171">Motive A1 Kursbuch</span><svg width="14" height="14" viewBox="0 0 14 14"><path d="M1 1l12 12M13 1L1 13" stroke="#d4485f" stroke-width="2" /></svg></div>
                <span v-fit="45" class="about">About</span>
                <svg class="spin" width="34" height="42" viewBox="0 0 34 42"><path d="M18.500 5.500A15.500 15.500 0 1 0 32 23" fill="none" stroke="#64a9ee" stroke-width="3.600" /></svg>
                <div class="logo"><b v-fit="102">Hueber</b></div>
              </div>
              <div class="tools">
                <svg class="t1" width="181" height="30" viewBox="0 0 181 30" fill="#1065a9">
                  <circle cx="6" cy="7" r="2.600" /><circle cx="6" cy="14" r="2.600" /><circle cx="6" cy="21" r="2.600" />
                  <path d="M75 2h12l6 6v16.500l-3.500-3.500a6.800 6.800 0 1 0-2.500 2.500l2.500 2.500H75q-2 0-2-2V4q0-2 2-2" /><circle cx="83.500" cy="17" r="4" />
                  <path d="M123.500 23V6M114.500 14.500l9-9 9 9M159.500 5v17M150.500 13.500l9 9 9-9" fill="none" stroke="#1065a9" stroke-width="2.400" />
                </svg>
                <div class="pg"><span v-fit="16">63</span></div><span v-fit="73" class="of">(63 von 76)</span>
                <svg class="hl" width="26" height="26" viewBox="0 0 26 26" fill="#1065a9"><path d="M19 1l5 1 1 5L16 17l-7-6zM8 12l7 6-2 2-3 0-4-4 0-3zM5 18l4 4-4 1-3 2H1v-2z" /></svg>
                <svg class="cm" width="24" height="24" viewBox="0 0 24 24"><path d="M2 0h20q2 0 2 2v22l-5-5H2q-2 0-2-2V2q0-2 2-2" fill="#1065a9" /><path d="M4 6h16M4 10h16M4 14h16" stroke="#fff" stroke-width="2" /></svg>
                <div class="tt"><svg width="24" height="20" viewBox="0 0 24 20"><path d="M0 2h15M7.500 2v17M12 8.500h12M18 8.500V19" stroke="#1065a9" stroke-width="3.600" fill="none" /></svg></div>
                <svg class="ab" width="28" height="28" viewBox="0 0 28 28" fill="none" stroke="#1065a9"><path d="M4 4h20v20H4z" stroke-width="2" /><path d="M1.500 1.500h5v5h-5zM21.500 1.500h5v5h-5zM1.500 21.500h5v5h-5zM21.500 21.500h5v5h-5z" fill="#fff" stroke-width="2.400" /><text x="14" y="19.500" text-anchor="middle" font-family="Roboto, sans-serif" font-size="16" fill="#1065a9" stroke="none">A</text></svg>
                <svg class="pen" width="23" height="23" viewBox="0 0 23 23" fill="#1065a9"><path d="M0 18L13 5l5 5L5 23H0zM15 3l2.500-2.500q1-1 2 0l3 3q1 1 0 2L20 8z" /></svg>
                <svg class="eye" width="26" height="24" viewBox="0 0 26 24"><path d="M0 12Q5 3 13 3t13 9q-5 9-13 9T0 12" fill="#1065a9" /><circle cx="13" cy="12" r="5" fill="#1065a9" stroke="#fff" stroke-width="2" /><path d="M1 3l22 21" stroke="#fff" stroke-width="2.500" /><path d="M3 1.500L24 22" stroke="#1065a9" stroke-width="2" /></svg>
                <svg class="bin" width="18" height="24" viewBox="0 0 18 24"><path d="M1 5h16v16q0 2-2 2H3q-2 0-2-2zM0 1h5l1-1h6l1 1h5v2.500H0z" fill="#1065a9" /><path d="M6 10.500l6 7M12 10.500l-6 7" stroke="#fff" stroke-width="2.400" /></svg>
                <svg class="z" width="100" height="28" viewBox="0 0 100 28" fill="none" stroke="#1065a9" stroke-width="2.200"><path d="M8 3H2v21h6M12 0v28" /><path d="M15 3h7v21h-7" stroke-dasharray="2.200 2.200" /><circle cx="50" cy="11" r="7.500" /><path d="M55 17l7 7M46.500 11h7" /><circle cx="86" cy="11" r="7.500" /><path d="M91 17l7 7M82.500 11h7M86 7.500v7" /></svg>
                <div class="zoom"><span v-fit="36">130%</span></div>
                <svg class="fs" width="18" height="18" viewBox="0 0 18 18"><path d="M1.200 6V1.200H6M12 1.200h4.800V6M16.800 12v4.800H12M6 16.800H1.200V12" fill="none" stroke="#1065a9" stroke-width="2.600" /></svg>
              </div>

              <div class="doc">
                <div class="page">
                  <div class="head"><svg class="dash" width="977" height="3" viewBox="0 0 977 3"><path d="M0 1.500h977" stroke="#d0709b" stroke-width="2.200" stroke-dasharray="5.200 2.500" /></svg>
                    <div class="seven"><i>7</i></div><div class="cee"><i>C</i></div></div>
                  <div class="row"><b class="lb">f</b><b v-fit="804" class="task">Suchen Sie die Partizipien in den Geschichten A–C. Schreiben Sie und ergänzen Sie den Infinitiv.</b></div>
                  <div class="chips"><span v-for="c in chips1" :key="c.t" class="chip" :style="{ width: c.w + 'px' }"><em v-fit="c.tw">{{ c.t }}</em><i v-if="c.s" class="cut" :style="{ width: c.tw + 'px' }"></i></span></div>
                  <div class="chips two"><span v-for="c in chips2" :key="c.t" class="chip" :style="{ width: c.w + 'px' }"><em v-fit="c.tw">{{ c.t }}</em></span></div>
                  <div class="tabrow">
                    <div class="tbl"><div v-for="(c, n) in cols" :key="n" class="col" :class="'k' + n">
                      <div class="th"><span v-fit="c.hw">{{ c.h }}</span><span v-if="c.e" v-fit="c.ew">{{ c.e }}</span></div>
                      <div class="td"><span v-fit="c.sw">{{ c.s }}</span><span class="el">…</span></div>
                    </div></div>
                    <div class="tip">
                      <svg width="195" height="66" viewBox="0 0 195 66" fill="none" stroke="#7c8b92" stroke-width="2"><path d="M1 45V1h46M194 21v44h-47" stroke-dasharray="6 4" /></svg>
                      <p><span v-fit="150">… habe … <u>ge</u>seh<u>en</u></span></p><p><span v-fit="136">… habe … <u>ge</u>sag<u>t</u></span></p>
                    </div>
                  </div>
                  <div class="row g"><b class="lb">g</b><div class="lines"><b v-fit="330" class="task">Ordnen Sie die Notizen zu Text A und B.</b><b v-fit="518" class="task">Schreiben Sie dann Lisas und Hannas Geschichte noch einmal.</b></div></div>
                  <div class="stories">
                    <span class="sl">A</span>
                    <div class="story"><b v-fit="264">beim Schloss Neuschwanstein</b>
                      <div v-for="s in storyA" :key="s.t" class="sr"><i class="blank">{{ s.n }}</i><span v-fit="s.w">{{ s.t }}</span><svg v-if="s.s" width="122" height="12" viewBox="0 0 122 12"><path d="M0 10h18l30-3L122 2" stroke="#7b98a0" stroke-width="1.300" fill="none" /></svg></div></div>
                    <span class="sl b">B</span>
                    <div class="story"><b v-fit="155">vor der Bibliothek</b>
                      <div v-for="s in storyB" :key="s.t" class="sr"><i class="blank">{{ s.n }}</i><span v-fit="s.w">{{ s.t }}</span></div></div>
                    <div class="paper">
                      <svg width="266" height="146" viewBox="0 0 266 146"><path d="M0 13L256 1l8 126-98 6-27-1-20 6-112 4z" fill="#d3cfc3" /><path d="M0 13L256 0l7 126-98 5-27-1-20 6-112 4z" fill="#f4f2ec" /></svg>
                      <div class="hand">
                        <p><span class="ha">A</span><span class="hn">1</span><span v-fit="135">Vor fünf Jahren</span></p>
                        <p class="in"><span v-fit="161">hat Lisa Peter zum</span></p>
                        <p class="in"><span v-fit="174">ersten Mal gesehen.</span></p>
                        <p class="i2"><span v-fit="94">2 Sie hat …</span></p>
                      </div>
                    </div>
                  </div>
                  <div class="row h"><b class="lb">h</b><b v-fit="437" class="task">Partnerarbeit. Erzählen Sie die Geschichten A und B.</b>
                    <div class="bubble"><svg width="190" height="40" viewBox="0 0 190 40"><path d="M4 1C-3 18 16 24 20 35q-2 3-5 3 4-6 18-5c30 1 50 8 90 6q42-2 64-27" fill="none" stroke="#8a95a5" stroke-width="1.300" /></svg><i v-fit="129">Vor fünf Jahren …</i></div></div>
                  <div class="row sec"><span class="ab2">AB</span><b v-fit="26" class="lb">C2</b><b v-fit="113" class="reis">Auf Reisen</b></div>
                  <div class="row last"><b v-fit="425" class="task">Welches Verb passt? Schreiben Sie Fragen im Perfekt.</b></div>
                </div>
                <div class="scroll"><i class="up"></i><i class="thumb"></i><i class="down"></i></div>

                <svg class="ringg" width="80" height="40" viewBox="0 0 80 40"><circle cx="40" cy="39" r="33" fill="none" stroke="#a2bf1f" stroke-width="6" /></svg>
                <span v-for="(n, k) in notes" :key="k" v-fit="n[3]" class="note" :style="noteStyle(n)">{{ n[0] }}</span>
                <svg class="bub b1" width="52" height="52" viewBox="0 0 52 52"><path d="M5 0h42q5 0 5 5v47l-11-10H5q-5 0-5-5V5q0-5 5-5" /><path d="M9 13h33M9 21.500h33M9 30h33" stroke="#fff" stroke-width="5.500" /></svg>
                <svg class="bub b2" width="52" height="52" viewBox="0 0 52 52"><path d="M5 0h42q5 0 5 5v47l-11-10H5q-5 0-5-5V5q0-5 5-5" /><path d="M9 13h33M9 21.500h33M9 30h33" stroke="#fff" stroke-width="5.500" /></svg>
                <div class="area"><span v-fit="254">AB S. 56, 2,3,4,5</span><svg width="19" height="19" viewBox="0 0 19 19"><path d="M1 18L17 1M7 18L17 8M13 18l5-5" stroke="#777" stroke-width="2.500" /></svg></div>
                <svg class="ibeam" width="9" height="20" viewBox="0 0 9 20"><path d="M1 1q3 0 3.500 2Q5 1 8 1M4.500 2v16M1 19q3 0 3.500-2 .5 2 3.500 2" fill="none" stroke="#333" stroke-width="1.200" /></svg>
                <div class="palette"><i v-for="s in swatches" :key="s" :style="{ background: s }"></i></div>
              </div>
            </div>

            <div class="share"><span v-fit="383">Anzeigen der Anwendung von Simone …</span></div>
            <div class="speaker"><svg width="18" height="16" viewBox="0 0 18 16"><path d="M1 0v16M17 8H5M10 2L4 8l6 6" fill="none" stroke="#fff" stroke-width="1.700" /></svg><span v-fit="259">Es spricht: Simone Durina-Sasdi</span></div>
            <div class="mic"><svg width="28" height="34" viewBox="0 0 28 34"><path d="M8 18V8a6 6 0 0 1 12 0v9a6 6 0 0 1-10 5M14 24v7M10 31.500h8M2 27L26 2" fill="none" stroke="#f0462f" stroke-width="1.800" /></svg></div>
          </div>
        </section>
      </main>
    </div>
  </div>
</template>

<style>
body { margin: 0; overflow: hidden; }
</style>

<style scoped>
.desk { width: 1920px; height: 1080px; overflow: hidden; display: flex; flex-direction: column; background: #fff; font-family: "Noto Sans", "Open Sans", sans-serif; }
.desk svg { flex: none; display: block; }
span, b, em, i { white-space: nowrap; transform-origin: 0 50%; flex: none; }
p { margin: 0; }
.topbar { height: 27px; flex: none; display: flex; align-items: center; background: linear-gradient(#57544b, #413f39); color: #dfdbd2; font-size: 15px; }
.topbar b { padding-bottom: 2px; }
.act { margin-left: 12px; }
.appico { margin-left: 20px; margin-top: -1px; }
.app { margin-left: 6px; }
.tri { margin-left: 6px; border: 5px solid transparent; border-top-color: #dfdbd2; border-bottom: 0; }
.clock { margin-left: 644px; }
.tray { margin-left: 729px; margin-top: -1px; }
.under { flex: 1; display: flex; min-height: 0; }
.dock { width: 67px; flex: none; background: linear-gradient(#563c40, #4b333c 45%, #3f3035); display: flex; flex-direction: column; }
.slot { height: 64px; flex: none; display: flex; align-items: center; justify-content: center; position: relative; box-sizing: border-box; }
.slot.on { height: 62px; margin: 1px 3px 1px 2px; background: #745c60; border-radius: 4px; }
.slot svg { margin-right: 1px; margin-top: -1px; }
.slot.monitor svg, .slot.vmm svg { margin-top: 6px; }
.run { position: absolute; left: 1px; top: 29px; width: 6px; height: 6px; border-radius: 3px; background: #f0532b; }
.slot.on .run { left: 0; top: 28px; }
.grid { margin: 46px 0 0 17px; display: grid; grid-template-columns: repeat(3, 7px); gap: 5px; }
.grid i { width: 7px; height: 7px; border-radius: 50%; background: #f3f1f1; }
.chrome { flex: 1; display: flex; flex-direction: column; min-width: 0; }
.wtitle { height: 28px; flex: none; display: flex; align-items: center; background: linear-gradient(#393732, #4e4c44); color: #dfdbd2; font-size: 15px; padding-left: 802px; }
.wtitle b { padding-bottom: 2px; }
.wbtns { margin-left: auto; margin-right: 4px; }
.tabs { height: 34px; flex: none; background: #dee1e6; display: flex; align-items: center; padding-left: 8px; }
.tab { width: 16px; height: 20px; flex: none; box-sizing: border-box; border-right: 1px solid #82868b; display: flex; align-items: center; justify-content: center; }
.tab.slim { width: 15px; }
.tab.slim svg { width: 10px; }
.tab:nth-child(112) { border: 0; }
.tab-on { width: 31px; height: 34px; background: #fff; border-radius: 8px 8px 0 0; display: flex; align-items: center; justify-content: center; }
.tab-on svg { margin-right: 2px; }
.plus { margin-left: 15px; }
.bar { height: 36px; flex: none; background: #fff; display: flex; align-items: center; }
.navs { margin: -2px 0 0 13px; }
.url { margin-left: 8px; width: 1400px; height: 28px; border-radius: 14px; background: #f1f3f4; display: flex; align-items: center; font-size: 15px; color: #6a6e72; }
.url > svg:first-child { margin: -2px 12px 0 12px; }
.url > span { padding-bottom: 2px; margin-left: -1px; }
.url > .path { margin-left: 0; }
.host { color: #202124; }
.urlico { margin: -1px 0 0 17px; }
.ext { margin-left: 8px; margin-top: -1px; }
.marks { height: 33px; flex: none; border-bottom: 1px solid #d4d5d8; display: flex; align-items: center; padding-left: 15px; font-size: 15px; color: #45494d; }
.mark { display: flex; align-items: center; gap: 9px; flex: none; margin-top: -4px; }
.more { margin: -4px 0 0 80px; font-size: 18px; line-height: 16px; color: #5f6368; }
.msep { width: 1px; height: 16px; background: #ccc; margin: -3px 12px 0 9px; }
.web { flex: 1; display: flex; background: #fff; min-height: 0; }
.left { width: 107px; flex: none; }
.info { margin: 18px 0 0 23px; width: 47px; height: 47px; border: 2px solid #e8e8e8; border-radius: 50%; display: flex; align-items: center; justify-content: center; }
.stage { width: 1639px; background: #2b292c; position: relative; }
.win { margin-left: 61px; width: 1517px; height: 863px; background: #fff; border-top: 1px solid #34405c; box-sizing: border-box; display: flex; flex-direction: column; overflow: hidden; }
.hb-title { height: 36px; flex: none; display: flex; align-items: center; padding-left: 10px; font-size: 16px; color: #333; }
.hb-title svg { margin-top: -6px; }
.hb-title span { margin-left: 5px; }
.hb-title .hb-btns { margin: -2px 0 0 1255px; }
.hb-nav { height: 74px; flex: none; border-bottom: 2px solid #9c9c9c; display: flex; align-items: center; font-family: Roboto, sans-serif; color: #777; }
.burger { margin-left: 29px; margin-top: 2px; }
.home { margin-left: 48px; display: flex; align-items: center; gap: 3px; font-size: 25px; }
.book { margin-left: 13px; box-sizing: border-box; width: 235px; height: 76px; margin-top: 2px; border-bottom: 3px solid #c03654; display: flex; align-items: center; padding: 0 0 2px 14px; font-size: 19px; color: #d65468; gap: 11px; }
.about { margin-left: 674px; font-size: 18px; padding-bottom: 3px; color: #8a8a8a; }
.spin { margin-left: 14px; }
.logo { margin-left: 18px; width: 169px; height: 48px; background: #db0f28; display: flex; align-items: center; box-sizing: border-box; padding: 1px 0 0 16px; color: #e4dcdd; font: bold 30px "Liberation Sans", sans-serif; }
.tools { height: 46px; flex: none; border-bottom: 1px solid #c8c8c8; display: flex; align-items: center; font: 16px "Liberation Sans", sans-serif; color: #444; }
.t1 { margin-left: 18px; }
.pg { width: 65px; height: 26px; border: 1px solid #999; border-radius: 2px; display: flex; align-items: center; justify-content: flex-end; box-sizing: border-box; padding-right: 7px; margin-top: -4px; }
.of { margin: -4px 0 0 4px; }
.hl { margin: 3px 0 0 231px; }
.cm { margin: 3px 0 0 32px; }
.tt { margin-left: 18px; width: 55px; height: 44px; background: #b3b2b4; border: 1px solid #666; border-radius: 2px; box-sizing: border-box; display: flex; align-items: center; justify-content: center; }
.tt svg { margin-top: 2px; }
.ab { margin: 4px 0 0 16px; }
.pen { margin: 4px 0 0 32px; }
.eye { margin: 4px 0 0 33px; }
.bin { margin: 4px 0 0 36px; }
.z { margin: -3px 0 0 246px; }
.zoom { margin: -5px 0 0 10px; width: 176px; height: 27px; box-sizing: border-box; border: 1px solid #999; border-radius: 2px; display: flex; align-items: center; padding: 1px 0 0 8px; }
.fs { margin-left: 15px; margin-top: -1px; }
.doc { flex: 1; min-height: 0; background: #dcdcdc; position: relative; display: flex; overflow: hidden; }
.page { margin-left: 130px; width: 1238px; background: #fefefe; display: flex; flex-direction: column; color: #333; }
.head { height: 65px; flex: none; display: flex; align-items: flex-start; }
.dash { margin-top: 41px; }
.seven, .cee { height: 43px; overflow: hidden; background: #e8f4f3; width: 107px; margin-left: 37px; font: italic 74px/44px "Liberation Serif", serif; color: #b32a62; box-sizing: border-box; padding-left: 62px; }
.cee { margin: 0; width: 62px; background: #c42065; color: #fff; padding-left: 11px; font-size: 66px; }
.seven i, .cee i { display: block; margin-top: -9px; transform: scaleX(.9); }
.cee i { margin-top: -6px; transform: scaleX(.82); }
.row { display: flex; flex: none; line-height: 26px; margin-left: 117px; font-family: "Open Sans", sans-serif; font-size: 19px; }
.lb { width: 42px; color: #c2326e; font-weight: 700; }
.task { font-weight: 700; align-self: flex-start; color: #383b3e; }
.chips { margin: 11px 0 0 159px; display: flex; gap: 2px; height: 25px; flex: none; }
.chips.two { margin-top: 2px; }
.chip { background: #dcecea; display: flex; align-items: center; color: #34474d; font-size: 18px; line-height: 24px; font-weight: 500; position: relative; box-sizing: border-box; padding-left: 6px; }
.chips:not(.two) .chip:nth-child(n + 2) { padding-left: 10px; }
.chips.two .chip:nth-child(n + 2) { padding-left: 10px; }
.chip em { font-style: normal; padding-bottom: 2px; }
.cut { position: absolute; top: 11px; height: 2px; background: #255a72; }
.tabrow { margin: 21px 0 0 159px; display: flex; flex: none; height: 117px; align-items: flex-start; font-family: "Liberation Serif", serif; font-size: 20px; }
.tbl { display: flex; }
.col { width: 177px; }
.th { height: 61px; box-sizing: border-box; background: #c9e5df; padding: 6px 0 0 9px; line-height: 25px; display: flex; flex-direction: column; align-items: flex-start; border-right: 2px solid #f4fbfa; }
.k3 .th { border: 0; }
.td { height: 56px; box-sizing: border-box; border-left: 1px solid #dcebea; padding: 3px 0 0 9px; display: flex; flex-direction: column; align-items: flex-start; color: #2f5c7a; font: italic 500 20px/26px Lato, sans-serif; }
.k2 .td { border-left: 3px solid #c9e5df; padding-left: 7px; }
.k3 .td { border-right: 1px solid #dcebea; }
.el { font-size: 14px; line-height: 28px; }
.tip { margin-left: 58px; width: 195px; height: 66px; background: #eaf4f2; position: relative; box-sizing: border-box; padding: 7px 0 0 19px; line-height: 25px; }
.tip svg { position: absolute; left: 0; top: 0; }
.tip p { display: flex; }
.tip u { text-decoration: none; color: #35a2ac; }
.row.g { margin-top: 33px; line-height: 27px; }
.lines { display: flex; flex-direction: column; align-items: flex-start; }
.stories { margin: 21px 0 0 160px; height: 147px; flex: none; display: flex; font-family: "Liberation Serif", serif; font-size: 20px; }
.sl { width: 27px; line-height: 18px; }
.sl.b { width: 24px; margin-left: 20px; }
.story { width: 323px; height: 147px; box-sizing: border-box; background: #f7f1df; padding: 8px 0 0 11px; line-height: 26px; display: flex; flex-direction: column; align-items: flex-start; }
.story b { line-height: 26px; }
.sr { display: flex; position: relative; }
.blank { width: 48px; height: 22px; border-bottom: 1px solid #8fa5ac; margin-right: 12px; font: 600 19px/24px "Open Sans", sans-serif; color: #2f5c7a; text-align: right; box-sizing: border-box; padding-right: 12px; }
.sr svg { position: absolute; left: 57px; top: 8px; }
.paper { margin-left: 27px; width: 266px; position: relative; }
.paper svg { position: absolute; left: 0; top: 0; }
.hand { position: relative; transform: rotate(-3deg); transform-origin: 0 0; margin: 21px 0 0 16px; font: 600 20px/26px Lato, sans-serif; color: #2f5674; }
.hand p { display: flex; }
.ha { width: 24px; }
.hn { width: 18px; }
.in { padding-left: 43px; }
.i2 { padding-left: 25px; }
.row.h { margin-top: 31px; }
.bubble { position: relative; margin: 4px 0 -40px 50px; width: 190px; height: 62px; font-family: "Liberation Serif", serif; display: flex; font-size: 20px; }
.bubble svg { position: absolute; left: 0; top: 15px; }
.bubble i { margin: 11px 0 0 32px; }
.row.sec { height: 30px; margin-top: 42px; margin-left: 84px; line-height: 29px; font-size: 24px; color: #b93266; }
.ab2 { width: 34px; font: 16px/37px "Liberation Serif", serif; color: #8095a6; }
.sec .lb { width: auto; }
.reis { margin-left: 15px; }
.row.last { margin: 17px 0 0 159px; }
.scroll { margin-left: auto; width: 21px; background: #f1f0f1; display: flex; flex-direction: column; align-items: center; }
.up { border: 4px solid transparent; border-bottom: 6px solid #444; border-top: 0; margin-top: 7px; }
.thumb { width: 17px; height: 20px; background: #cdcccd; margin-top: 537px; }
.down { border: 4px solid transparent; border-top: 6px solid #444; border-bottom: 0; margin-top: 120px; }
.note { position: absolute; line-height: 1; font-family: "Liberation Sans", sans-serif; color: #222; }
.ringg { position: absolute; left: 176px; top: 676px; height: 40px; }
.bub { position: absolute; left: 997px; top: 207px; }
.bub.b2 { left: 985px; top: 647px; }
.area { position: absolute; left: 991px; top: 271px; width: 265px; height: 38px; box-sizing: border-box; border: 1px solid #aaa; background: #fff; font: 24px/28px "Liberation Mono", monospace; color: #555; padding-left: 1px; }
.area span { display: inline-block; }
.area svg { position: absolute; right: 4px; bottom: 5px; }
.ibeam { position: absolute; left: 1013px; top: 136px; }
.palette { position: absolute; left: 608px; top: 0; width: 301px; height: 59px; box-sizing: border-box; background: #fff; box-shadow: 0 8px 16px 4px rgba(0, 0, 0, .45); clip-path: inset(0 -30px -40px -30px); display: flex; align-items: center; justify-content: center; gap: 12px; }
.palette i { width: 36px; height: 36px; border-radius: 50%; }
.share { position: absolute; left: 595px; top: 11px; width: 423px; height: 54px; box-sizing: border-box; border: 2px solid #e8e8e8; border-radius: 27px; background: #fff; display: flex; align-items: center; padding-left: 14px; font: 20px "Liberation Sans", sans-serif; color: #000; }
.speaker { position: absolute; left: 1311px; top: 57px; width: 360px; height: 42px; border-radius: 4px; background: rgba(0, 0, 0, .2); display: flex; align-items: center; box-sizing: border-box; padding-left: 15px; font: 18px "Liberation Sans", sans-serif; color: #fff; }
.speaker span { margin-left: 27px; }
.mic { position: absolute; left: 784px; top: 822px; width: 78px; height: 78px; box-sizing: border-box; border: 2px solid #f0462f; border-radius: 50%; background: rgba(245, 60, 50, .12); display: flex; align-items: center; justify-content: center; }
</style>
